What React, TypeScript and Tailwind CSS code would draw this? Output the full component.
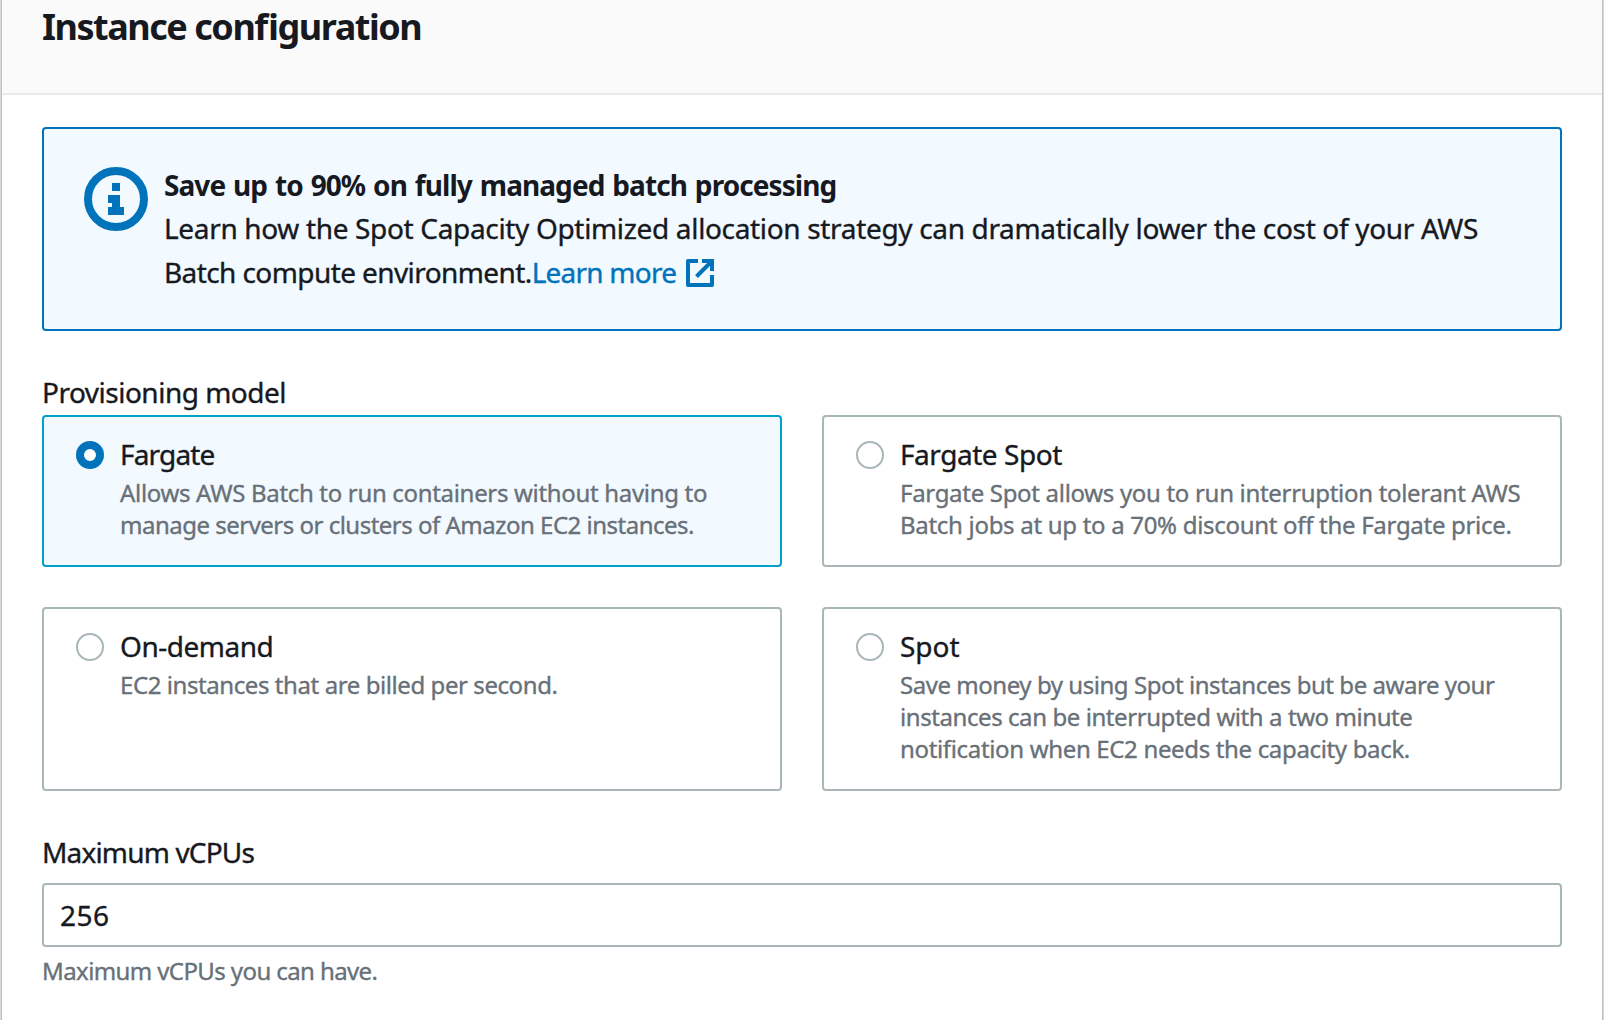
import React from "react";
import { clsx } from "clsx";

type Line = { text: string; tracking: string };
type Option = { label: string; tracking: string; lines: Line[]; selected?: boolean };

const options: Option[] = [
  {
    label: "Fargate",
    tracking: "tracking-[-0.84px]",
    selected: true,
    lines: [
      { text: "Allows AWS Batch to run containers without having to", tracking: "tracking-[-0.32px]" },
      { text: "manage servers or clusters of Amazon EC2 instances.", tracking: "tracking-[-0.505px]" },
    ],
  },
  {
    label: "Fargate Spot",
    tracking: "tracking-[-0.45px]",
    lines: [
      { text: "Fargate Spot allows you to run interruption tolerant AWS", tracking: "tracking-[-0.309px]" },
      { text: "Batch jobs at up to a 70% discount off the Fargate price.", tracking: "tracking-[-0.3px]" },
    ],
  },
  {
    label: "On-demand",
    tracking: "tracking-[-0.48px]",
    lines: [{ text: "EC2 instances that are billed per second.", tracking: "tracking-[-0.42px]" }],
  },
  {
    label: "Spot",
    tracking: "tracking-normal",
    lines: [
      { text: "Save money by using Spot instances but be aware your", tracking: "tracking-[-0.457px]" },
      { text: "instances can be interrupted with a two minute", tracking: "tracking-[-0.425px]" },
      { text: "notification when EC2 needs the capacity back.", tracking: "tracking-[-0.34px]" },
    ],
  },
];

function InfoIcon() {
  return (
    <svg viewBox="0 0 16 16" className="mt-[5px] size-16 shrink-0" fill="none">
      <circle cx="8" cy="8" r="7" stroke="#0073bb" strokeWidth="2" />
      <path d="M7 4h2v2H7zM6 7h3v3h1v2H6v-2h1V9H6z" fill="#0073bb" />
    </svg>
  );
}

function ExternalIcon() {
  return (
    <svg viewBox="0 0 28 28" className="mt-0.5 ml-2.5 size-7" fill="none">
      <path d="M12 2H2v24h24V16" stroke="#0073bb" strokeWidth="4" strokeLinejoin="round" />
      <path d="M16 2h10v10M26 2L10.5 17.5" stroke="#0073bb" strokeWidth="4" />
    </svg>
  );
}

function OptionCard({ label, tracking, lines, selected }: Option) {
  return (
    <div
      className={clsx(
        "flex rounded-[4px] border-2 pt-[15px] pl-8",
        selected ? "border-[#00a1c9] bg-[#f2f9ff]" : "border-[#aab7b8] bg-white"
      )}
    >
      <span
        className={clsx(
          "mt-[9px] size-7 shrink-0 rounded-full bg-white",
          selected ? "border-8 border-[#0073bb]" : "border-2 border-[#aab7b8]"
        )}
      />
      <div className="ml-4 whitespace-nowrap">
        <div className={clsx("text-[28px] leading-[44px]", tracking)}>{label}</div>
        <div className="mt-px text-2xl leading-8 text-[#687078]">
          {lines.map((line) => (
            <div key={line.text} className={clsx("leading-8", line.tracking)}>
              {line.text}
            </div>
          ))}
        </div>
      </div>
    </div>
  );
}

export default function App() {
  return (
    <div className="h-[1020px] overflow-hidden border-x border-[#d5dbdb] bg-white font-['Noto_Sans',sans-serif] text-[#16191f] [-webkit-text-stroke:0.35px]">
      <div className="h-full border-x border-[#b9c3c3]">
        <header className="h-[95px] border-b-2 border-[#eaeaea] bg-[#fafafa] pt-[5px] pl-10">
          <h2 className="text-4xl leading-[44px] font-bold tracking-[-1.47px] [-webkit-text-stroke:0] [font-feature-settings:'liga']">
            Instance configuration
          </h2>
        </header>

        <main className="px-10 pt-8">
          <section className="flex h-[204px] rounded-[4px] border-2 border-[#0073bb] bg-[#f2f9ff] pt-[33px] pl-10">
            <InfoIcon />
            <div className="ml-4 text-[28px] leading-[44px] whitespace-nowrap">
              <div className="-mb-0.5 leading-[46px] font-bold tracking-[-0.92px] [word-spacing:1.5px] [-webkit-text-stroke:0]">
                Save up to 90% on fully managed batch processing
              </div>
              <div className="tracking-[-0.336px]">
                Learn how the Spot Capacity Optimized allocation strategy can dramatically lower the cost of your AWS
              </div>
              <div className="flex items-center">
                <span className="tracking-[-0.59px]">Batch compute environment.</span>
                <a className="flex items-center text-[#0073bb]">
                  <span className="tracking-[-0.772px]">Learn more</span>
                  <ExternalIcon />
                </a>
              </div>
            </div>
          </section>

          <section className="mt-[39px]">
            <div className="text-[28px] leading-[44px] tracking-[-0.5px]">Provisioning model</div>
            <div className="mt-px grid grid-cols-2 grid-rows-[152px_184px] gap-10">
              {options.map((option) => (
                <OptionCard key={option.label} {...option} />
              ))}
            </div>
          </section>

          <section className="mt-[39px]">
            <label htmlFor="max-vcpus" className="block text-[28px] leading-[44px] tracking-[-0.826px]">
              Maximum vCPUs
            </label>
            <input
              id="max-vcpus"
              defaultValue="256"
              className="mt-[9px] block h-16 w-full rounded-[4px] border-2 border-[#aab7b8] bg-white px-4 text-[28px] leading-[44px] tracking-[0.5px] outline-none"
            />
            <p className="mt-2 text-2xl leading-8 tracking-[-0.6px] text-[#687078]">Maximum vCPUs you can have.</p>
          </section>
        </main>
      </div>
    </div>
  );
}
